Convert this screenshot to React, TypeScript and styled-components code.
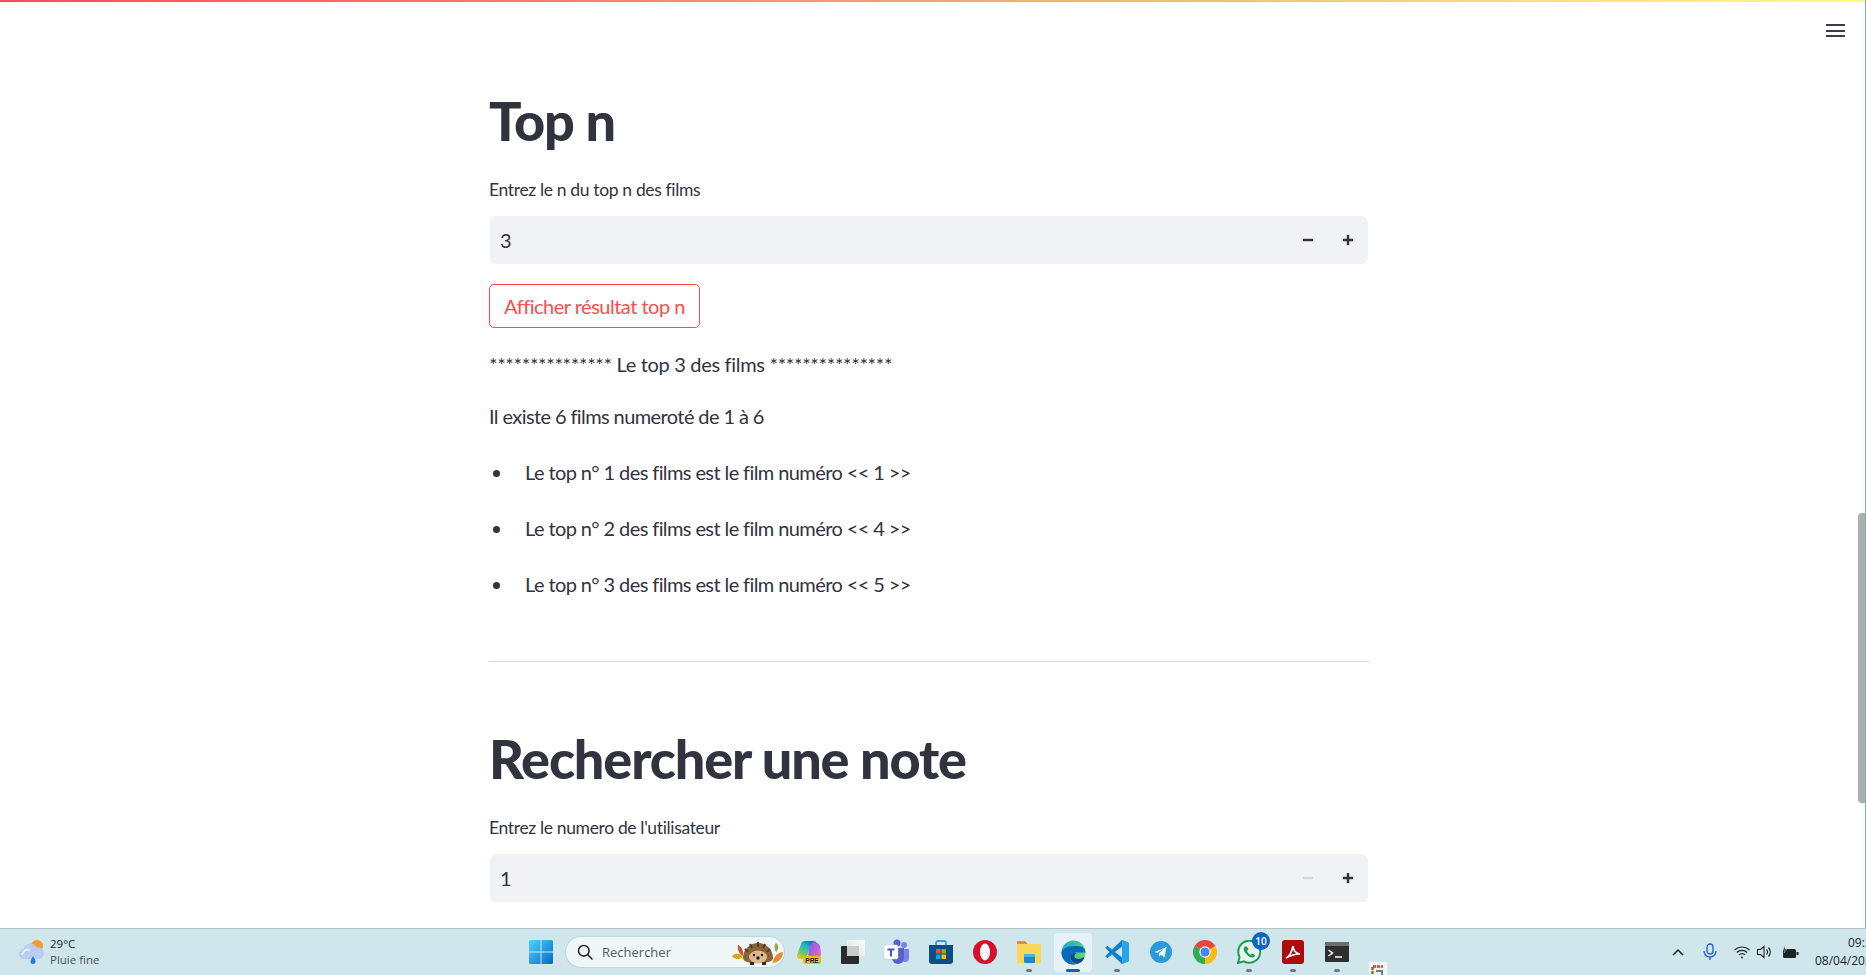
import styled, { createGlobalStyle } from "styled-components";

const GlobalStyle = createGlobalStyle`
  html, body { margin: 0; padding: 0; height: 100%; overflow: hidden; background: #fff; }
  #root { height: 100%; }
`;

const textFont = `"Lato", "Noto Sans", "Liberation Sans", sans-serif`;
const systemFont = `"Open Sans", "Noto Sans", sans-serif`;

const Screen = styled.div`
  height: 975px;
  display: grid;
  grid-template-rows: 1fr 47px;
  font-family: ${textFont};
  color: #31333f;
`;

const Page = styled.main`
  position: relative;
  overflow: hidden;
  border-right: 1px solid #6fb3b3;
  padding-top: 2px;
`;

const Rainbow = styled.div`
  position: absolute;
  top: 0;
  left: 0;
  right: 0;
  height: 2px;
  background: linear-gradient(90deg, #ff4b4b, #fffd80);
`;

const Hamburger = styled.div`
  position: absolute;
  top: 24px;
  left: 1826px;
  width: 19px;
  display: flex;
  flex-direction: column;
  gap: 3.5px;
  span {
    height: 2px;
    background: #3a3c49;
  }
`;

const ScrollThumb = styled.div`
  position: absolute;
  top: 513px;
  left: 1858px;
  width: 7px;
  height: 290px;
  background: #adadb2;
  border-radius: 4px 0 0 4px;
`;

const Column = styled.div`
  width: 880px;
  margin: 0 0 0 489px;
  padding-top: 85px;
`;

const Heading = styled.h1`
  margin: 0;
  height: 68px;
  line-height: 68px;
  font-size: 54px;
  font-weight: 900;
  letter-spacing: -1.15px;
  color: #31333f;
`;

const FieldLabel = styled.label`
  display: block;
  margin-top: 23px;
  height: 24px;
  line-height: 24px;
  font-size: 17.5px;
  letter-spacing: -0.35px;
`;

const NumberField = styled.div`
  margin-top: 14px;
  height: 48px;
  width: 878px;
  margin-left: 1px;
  display: flex;
  align-items: center;
  background: #f0f2f6;
  border-radius: 6px;
  font-size: 20px;
`;

const NumberValue = styled.span`
  flex: 1;
  padding-left: 10px;
`;

const StepButton = styled.button<{ $dim?: boolean }>`
  width: 40px;
  height: 48px;
  padding: 0;
  border: none;
  background: none;
  display: flex;
  align-items: center;
  justify-content: center;
  color: ${(p) => (p.$dim ? "#d5d6da" : "#31333f")};
`;

const OutlineButton = styled.button`
  display: block;
  margin-top: 20px;
  width: 211px;
  height: 44px;
  padding: 0;
  background: #fff;
  border: 1px solid #ff4b4b;
  border-radius: 5px;
  color: #ff4b4b;
  font-family: ${textFont};
  font-size: 20px;
  letter-spacing: -0.5px;
`;

const Paragraph = styled.p<{ $spacing: number }>`
  margin: 0;
  height: 30px;
  line-height: 30px;
  font-size: 20px;
  letter-spacing: ${(p) => p.$spacing}px;
`;

const ResultBlock = styled.div`
  margin-top: 21px;
  display: flex;
  flex-direction: column;
  gap: 22px;
`;

const Bullets = styled.ul`
  margin: 26px 0 0;
  padding: 0;
  list-style: none;
  display: flex;
  flex-direction: column;
  gap: 26px;
`;

const Bullet = styled.li`
  display: flex;
  align-items: center;
  height: 30px;
  line-height: 30px;
  font-size: 20px;
  letter-spacing: -0.6px;
  white-space: pre;
  &::before {
    content: "";
    width: 7px;
    height: 7px;
    border-radius: 50%;
    background: #31333f;
    margin: 2px 25px 0 4px;
  }
`;

const Rule = styled.hr`
  margin: 62px 0 63px;
  height: 1px;
  width: 880px;
  border: none;
  background: #d6d7db;
`;

const Taskbar = styled.footer`
  position: relative;
  display: flex;
  align-items: center;
  background: #cfe6ec;
  border-top: 1px solid #b4c0c4;
  box-sizing: border-box;
  overflow: hidden;
  font-family: ${systemFont};
`;

const Weather = styled.div`
  width: 519px;
  flex: none;
  display: flex;
  align-items: center;
  gap: 4px;
  padding-left: 18px;
  box-sizing: border-box;
`;

const WeatherText = styled.div`
  font-size: 11.5px;
  line-height: 16px;
  color: #1c2526;
  span {
    display: block;
    color: #4a5558;
  }
`;

const Slot = styled.div<{ $active?: boolean; $running?: boolean }>`
  position: relative;
  flex: none;
  width: 44px;
  height: 39px;
  display: flex;
  align-items: center;
  justify-content: center;
  border-radius: 4px;
  background: ${(p) => (p.$active ? "#e6f2f5" : "transparent")};
  &::after {
    content: "";
    display: ${(p) => (p.$running || p.$active ? "block" : "none")};
    position: absolute;
    bottom: 0;
    left: 50%;
    transform: translateX(-50%);
    width: ${(p) => (p.$active ? "14px" : "6px")};
    height: 3px;
    border-radius: 2px;
    background: ${(p) => (p.$active ? "#0067c0" : "#6f7b7f")};
  }
`;

const EdgeSlot = styled(Slot)`
  width: 38px;
  margin: 0 3px;
`;

const SearchPill = styled.div`
  flex: none;
  width: 218px;
  height: 30px;
  margin: 0 3px 0 3px;
  box-sizing: border-box;
  display: flex;
  align-items: center;
  gap: 9px;
  padding: 0 0 0 11px;
  background: #eff7f9;
  border-radius: 15px;
  box-shadow: 0 0 0 1px #c3d6db;
  font-size: 13px;
  color: #555f62;
`;

const SearchLabel = styled.span`
  flex: 1;
`;

const Badge = styled.span`
  position: absolute;
  top: -1px;
  right: 1px;
  width: 18px;
  height: 18px;
  border-radius: 50%;
  background: #0b66c2;
  color: #fff;
  font-size: 10px;
  font-weight: 600;
  line-height: 18px;
  text-align: center;
`;

const Tray = styled.div`
  margin-left: auto;
  display: flex;
  align-items: center;
  flex: none;
  width: 204px;
  overflow: hidden;
`;

const TrayIcon = styled.div<{ $w: number }>`
  width: ${(p) => p.$w}px;
  flex: none;
  display: flex;
  justify-content: center;
`;

const Clock = styled.div`
  flex: none;
  width: 60px;
  margin-left: 8px;
  font-size: 12px;
  line-height: 18px;
  color: #1c2526;
  white-space: nowrap;
  div:first-child {
    padding-left: 33px;
  }
`;

const FloatingTile = styled.div`
  position: absolute;
  left: 1369px;
  top: 33px;
  width: 18px;
  height: 20px;
  background: #eef6f8;
  display: flex;
  padding: 3px 0 0 2px;
  box-sizing: border-box;
`;

const MinusIcon = () => (
  <svg width="10" height="10" viewBox="0 0 10 10">
    <rect y="3.8" width="10" height="2.4" fill="currentColor" />
  </svg>
);

const PlusIcon = () => (
  <svg width="10" height="10" viewBox="0 0 10 10">
    <path d="M0 3.8h3.8V0h2.4v3.8H10v2.4H6.2V10H3.8V6.2H0z" fill="currentColor" />
  </svg>
);

const WeatherIcon = () => (
  <svg width="28" height="28" viewBox="0 0 28 28">
    <circle cx="19" cy="8" r="6" fill="#f79a2e" />
    <path d="M6 21a5 5 0 0 1-.5-10 7 7 0 0 1 13-1.500 5.500 5.500 0 0 1 3 11.500z" fill="#b9cdf2" />
    <path d="M4 17a6 6 0 0 1 8-5" stroke="#e8effb" strokeWidth="2" fill="none" />
    <path d="M12 18c2 3 2.500 4 2.500 5.500a2.500 2.500 0 0 1-5 0C9.500 22 11 20 12 18z" transform="translate(3 0)" fill="#1f7fe0" />
  </svg>
);

const WindowsIcon = () => (
  <svg width="24" height="24" viewBox="0 0 24 24">
    <defs>
      <linearGradient id="win" x1="0" y1="0" x2="1" y2="1">
        <stop offset="0" stopColor="#4fd3fb" />
        <stop offset="1" stopColor="#0669c9" />
      </linearGradient>
    </defs>
    <path d="M0 1.500A1.500 1.500 0 0 1 1.500 0h10v11.500H0zM12.500 0h10A1.500 1.500 0 0 1 24 1.500v10H12.500zM0 12.500h11.500V24h-10A1.500 1.500 0 0 1 0 22.500zM12.500 12.500H24v10a1.500 1.500 0 0 1-1.500 1.500h-10z" fill="url(#win)" />
  </svg>
);

const SearchIcon = () => (
  <svg width="16" height="16" viewBox="0 0 16 16" fill="none" stroke="#222" strokeWidth="1.600">
    <circle cx="6.800" cy="6.800" r="5.300" />
    <path d="M10.800 10.800l4.200 4.200" strokeLinecap="round" />
  </svg>
);

const Hedgehog = () => (
  <svg width="52" height="26" viewBox="0 0 52 26">
    <path d="M6 6c4 2 6 7 5 11C7 15 5 10 6 6z" fill="#c9572a" />
    <path d="M0 17c3-3 8-3 11 1-3 3-8 3-11-1z" fill="#d9a227" />
    <path d="M44 4c3 2 3 6 0 9-2-3-2-7 0-9z" fill="#9aa83a" />
    <path d="M41 24c0-6 4-10 10-11 0 6-4 10-10 11z" fill="#ec8a2b" />
    <path d="M11 19a15 15 0 0 1 30 0c0 3-4 5-15 5s-15-2-15-5z" fill="#8b6238" />
    <path d="M13 10l3 3M18 5l2 4M26 3v5M33 5l-2 4M38 10l-3 3" stroke="#5b3d20" strokeWidth="2" />
    <ellipse cx="26" cy="18" rx="9" ry="6.500" fill="#dcb98a" />
    <circle cx="22" cy="16" r="1.200" fill="#222" />
    <circle cx="30" cy="16" r="1.200" fill="#222" />
    <circle cx="26" cy="19" r="1.700" fill="#222" />
    <rect x="18" y="23" width="4" height="3" fill="#3e2c1a" />
    <rect x="30" y="23" width="4" height="3" fill="#3e2c1a" />
  </svg>
);

const CopilotIcon = () => (
  <svg width="26" height="26" viewBox="0 0 26 26">
    <defs>
      <linearGradient id="cop" x1="0.800" y1="0" x2="0.200" y2="1">
        <stop offset="0" stopColor="#1668d8" />
        <stop offset="0.35" stopColor="#2bb5c8" />
        <stop offset="0.7" stopColor="#6cc860" />
        <stop offset="1" stopColor="#e6c33a" />
      </linearGradient>
      <linearGradient id="cop2" x1="0" y1="0" x2="1" y2="1">
        <stop offset="0" stopColor="#6d5fe6" />
        <stop offset="0.6" stopColor="#c45fd8" />
        <stop offset="1" stopColor="#ef7ea0" />
      </linearGradient>
    </defs>
    <path d="M13 7l3-4a3 3 0 0 1 3-1l2 2a4 4 0 0 1 3 3l1 7a4 4 0 0 1-4 5h-9z" fill="url(#cop2)" />
    <path d="M9 2h9c-2 1-3 3-4 6l-3 9a4 4 0 0 1-4 3H4a3 3 0 0 1-3-4L5 5a4 4 0 0 1 4-3z" fill="url(#cop)" />
    <rect x="7" y="17" width="18" height="8" rx="2" fill="#f3bd0f" />
    <text x="16" y="23.500" fontSize="6.500" fontWeight="700" textAnchor="middle" fontFamily="Liberation Sans, sans-serif" fill="#222">PRE</text>
  </svg>
);

const DesktopsIcon = () => (
  <svg width="24" height="24" viewBox="0 0 24 24">
    <defs>
      <linearGradient id="dsk" x1="1" y1="0" x2="0" y2="1">
        <stop offset="0" stopColor="#fbfcfc" />
        <stop offset="1" stopColor="#dfe3e4" />
      </linearGradient>
    </defs>
    <rect x="6" y="0" width="18" height="16" rx="1" fill="url(#dsk)" />
    <rect x="0" y="6" width="18" height="18" rx="1" fill="#2b2b2b" />
    <rect x="6" y="6" width="12" height="10" fill="#c9cccd" />
  </svg>
);

const TeamsIcon = () => (
  <svg width="26" height="26" viewBox="0 0 26 26">
    <circle cx="20" cy="6" r="3" fill="#7b83eb" />
    <circle cx="13" cy="4" r="3.500" fill="#5b5fc7" />
    <path d="M16 10h9v9a4 4 0 0 1-8 0z" fill="#7b83eb" />
    <path d="M8 9h12v10a6 6 0 0 1-12 0z" fill="#5b5fc7" />
    <rect x="0" y="6" width="14" height="14" rx="1.500" fill="#fff" stroke="#c9cbe8" strokeWidth="0.500" />
    <path d="M3.500 9.500h7v2H8v6H6v-6H3.500z" fill="#4b53bc" />
  </svg>
);

const StoreIcon = () => (
  <svg width="24" height="24" viewBox="0 0 24 24">
    <path d="M7 6V3a2 2 0 0 1 2-2h6a2 2 0 0 1 2 2v3" fill="none" stroke="#25a7e2" strokeWidth="1.800" />
    <path d="M0 5h24v16a3 3 0 0 1-3 3H3a3 3 0 0 1-3-3z" fill="#0e4c86" />
    <rect x="7" y="9" width="4.500" height="4.500" fill="#f25022" />
    <rect x="12.500" y="9" width="4.500" height="4.500" fill="#7fba00" />
    <rect x="7" y="14.500" width="4.500" height="4.500" fill="#00a4ef" />
    <rect x="12.500" y="14.500" width="4.500" height="4.500" fill="#ffb900" />
  </svg>
);

const OperaIcon = () => (
  <svg width="24" height="24" viewBox="0 0 24 24">
    <circle cx="12" cy="12" r="12" fill="#d5112a" />
    <ellipse cx="12" cy="12" rx="5" ry="8.500" fill="#f4f7f7" />
  </svg>
);

const FolderIcon = () => (
  <svg width="24" height="24" viewBox="0 0 24 24">
    <path d="M0 2a1 1 0 0 1 1-1h7l3 3h-11z" fill="#d39a12" />
    <path d="M0 4h24v18a1 1 0 0 1-1 1H1a1 1 0 0 1-1-1z" fill="#fbd65a" />
    <rect x="7" y="14" width="11" height="9" rx="1" fill="#1c87c9" />
    <rect x="7" y="14" width="11" height="3" fill="#46b4e6" />
  </svg>
);

const EdgeIcon = () => (
  <svg width="25" height="25" viewBox="0 0 25 25">
    <defs>
      <linearGradient id="edg" x1="0" y1="0" x2="1" y2="0.600">
        <stop offset="0" stopColor="#1ea0d8" />
        <stop offset="1" stopColor="#5ddc6c" />
      </linearGradient>
    </defs>
    <circle cx="12.500" cy="12.500" r="12" fill="url(#edg)" />
    <path d="M0.500 12a12 12 0 0 0 17 11.500c-4 1-8-1-8-6 0-3 3-5 7-5h8C24 8 21 6 16 6 8 6 3 7 .5 12z" fill="#0c68bb" />
    <path d="M9.500 17c0 4.500 4 7 8 6.500 3-1 5.500-3.500 6-7-3 2.500-7 3-9 1.500-2-1.300-1-4 1-5-3.500-.5-6 1-6 4z" fill="#0b4b94" />
  </svg>
);

const VsCodeIcon = () => (
  <svg width="24" height="24" viewBox="0 0 24 24">
    <path d="M17 0l7 3v18l-7 3-10-9.500L2.500 18 0 16.500 4.500 12 0 7.500 2.500 6 7 9.500z" fill="#0f7fc9" />
    <path d="M17 0l7 3v18l-7 3z" fill="#26a6ed" />
    <path d="M17 6.500L10 12l7 5.500z" fill="#cfe6ec" />
  </svg>
);

const TelegramIcon = () => (
  <svg width="22" height="22" viewBox="0 0 24 24">
    <circle cx="12" cy="12" r="12" fill="#2a9bd6" />
    <path d="M5 12l13-5.500-2 11.500-4-3-2 2-.5-3.500 6-5.500-7.500 5z" fill="#e8f4fa" />
  </svg>
);

const ChromeIcon = () => (
  <svg width="24" height="24" viewBox="0 0 24 24">
    <path d="M12 12L1.600 6A12 12 0 0 1 22.400 6z" fill="#e8453c" />
    <path d="M12 12L22.400 6A12 12 0 0 1 12 24z" fill="#f9bc15" />
    <path d="M12 12L12 24A12 12 0 0 1 1.600 6z" fill="#34a853" />
    <circle cx="12" cy="12" r="5.700" fill="#fff" />
    <circle cx="12" cy="12" r="4.500" fill="#4285f4" />
  </svg>
);

const WhatsappIcon = () => (
  <svg width="24" height="24" viewBox="0 0 24 24">
    <path d="M1 23l1.600-6A11 11 0 1 1 7 21.400z" fill="#e8f5ee" stroke="#1c9c55" strokeWidth="2" />
    <path d="M8 6.500c-1.500 1-2 3 0 6s5 5 7.500 5c1.500 0 2.500-1 2.500-2.500l-3-1.500-1.200 1.300c-1.500-.5-3-2-3.800-3.800L11.500 9.500 10 6.500z" fill="#1c9c55" />
  </svg>
);

const AcrobatIcon = () => (
  <svg width="22" height="24" viewBox="0 0 22 24">
    <rect width="22" height="24" rx="3" fill="#ad0b0b" />
    <path d="M4 18c3-1 6-6 7-12 .5 5 2.500 7.500 7 8-5 0-9 1-14 4z" fill="none" stroke="#fff" strokeWidth="1.600" />
  </svg>
);

const TerminalIcon = () => (
  <svg width="24" height="20" viewBox="0 0 24 20">
    <rect width="24" height="20" rx="1.500" fill="#2f2f2f" />
    <rect width="24" height="4" fill="#6e6e6e" />
    <path d="M3.500 8l4 3-4 3" fill="none" stroke="#fff" strokeWidth="1.500" />
    <path d="M10 15h7" stroke="#fff" strokeWidth="1.500" />
  </svg>
);

const ChevronIcon = () => (
  <svg width="12" height="8" viewBox="0 0 12 8" fill="none" stroke="#1c2526" strokeWidth="1.500">
    <path d="M1 7l5-5 5 5" />
  </svg>
);

const MicIcon = () => (
  <svg width="14" height="18" viewBox="0 0 14 18" fill="none" stroke="#1f5fd0" strokeWidth="1.300">
    <rect x="4" y="1" width="6" height="10" rx="3" />
    <path d="M1 8a6 6 0 0 0 12 0M7 14v3" />
  </svg>
);

const WifiIcon = () => (
  <svg width="16" height="13" viewBox="0 0 16 13" fill="none" stroke="#1c2526" strokeWidth="1.100">
    <path d="M.5 4a11 11 0 0 1 15 0M2.800 6.500a7.500 7.500 0 0 1 10.400 0M5 9a4 4 0 0 1 6 0" />
    <circle cx="8" cy="11.500" r="1" fill="#1c2526" stroke="none" />
  </svg>
);

const SpeakerIcon = () => (
  <svg width="16" height="14" viewBox="0 0 16 14" fill="none" stroke="#1c2526" strokeWidth="1.100">
    <path d="M.5 4.500h3L7 1.500v11l-3.500-3h-3z" />
    <path d="M9.500 4.500a3.500 3.500 0 0 1 0 5M11.500 2.500a6.500 6.500 0 0 1 0 9" />
  </svg>
);

const BatteryIcon = () => (
  <svg width="17" height="13" viewBox="0 0 17 13">
    <rect x="1" y="3" width="13" height="9" rx="1.500" fill="#1c2526" />
    <rect x="14.500" y="6" width="2" height="3" fill="#1c2526" />
    <path d="M3 0L1 4h2l-1 3 3-4H3z" fill="#1c2526" stroke="#cfe6ec" strokeWidth="0.400" />
  </svg>
);

const TileIcon = () => (
  <svg width="14" height="17" viewBox="0 0 14 17" fill="none" stroke="#c8452a" strokeWidth="2.400" strokeDasharray="3 1">
    <path d="M1.500 17V1.500H12" />
    <path d="M5 6h7" stroke="#6f7b7f" strokeWidth="2" strokeDasharray="none" />
    <path d="M11 6v11" stroke="#6f7b7f" strokeWidth="2" strokeDasharray="none" />
  </svg>
);

const pinnedBefore = [CopilotIcon, DesktopsIcon, TeamsIcon, StoreIcon, OperaIcon];

const topResults = [
  { rank: 1, film: 1 },
  { rank: 2, film: 4 },
  { rank: 3, film: 5 },
];

const App = () => {
  return (
    <>
      <GlobalStyle />
      <Screen>
        <Page>
          <Rainbow />
          <Hamburger>
            <span />
            <span />
            <span />
          </Hamburger>
          <ScrollThumb />
          <Column>
            <Heading>Top n</Heading>
            <FieldLabel>Entrez le n du top n des films</FieldLabel>
            <NumberField>
              <NumberValue>3</NumberValue>
              <StepButton>
                <MinusIcon />
              </StepButton>
              <StepButton>
                <PlusIcon />
              </StepButton>
            </NumberField>
            <OutlineButton>Afficher résultat top n</OutlineButton>
            <ResultBlock>
              <Paragraph $spacing={-0.32}>*************** Le top 3 des films ***************</Paragraph>
              <Paragraph $spacing={-0.6}>Il existe 6 films numeroté de 1 à 6</Paragraph>
            </ResultBlock>
            <Bullets>
              {topResults.map((r) => (
                <Bullet key={r.rank}>
                  {`Le top n° ${r.rank} des films est le film numéro << ${r.film} >>`}
                </Bullet>
              ))}
            </Bullets>
            <Rule />
            <Heading>Rechercher une note</Heading>
            <FieldLabel>Entrez le numero de l'utilisateur</FieldLabel>
            <NumberField>
              <NumberValue>1</NumberValue>
              <StepButton $dim>
                <MinusIcon />
              </StepButton>
              <StepButton>
                <PlusIcon />
              </StepButton>
            </NumberField>
          </Column>
        </Page>
        <Taskbar>
          <Weather>
            <WeatherIcon />
            <WeatherText>
              29°C
              <span>Pluie fine</span>
            </WeatherText>
          </Weather>
          <Slot>
            <WindowsIcon />
          </Slot>
          <SearchPill>
            <SearchIcon />
            <SearchLabel>Rechercher</SearchLabel>
            <Hedgehog />
          </SearchPill>
          {pinnedBefore.map((Icon, i) => (
            <Slot key={i}>
              <Icon />
            </Slot>
          ))}
          <Slot $running>
            <FolderIcon />
          </Slot>
          <EdgeSlot $active>
            <EdgeIcon />
          </EdgeSlot>
          <Slot $running>
            <VsCodeIcon />
          </Slot>
          <Slot>
            <TelegramIcon />
          </Slot>
          <Slot>
            <ChromeIcon />
          </Slot>
          <Slot $running>
            <WhatsappIcon />
            <Badge>10</Badge>
          </Slot>
          <Slot $running>
            <AcrobatIcon />
          </Slot>
          <Slot $running>
            <TerminalIcon />
          </Slot>
          <FloatingTile>
            <TileIcon />
          </FloatingTile>
          <Tray>
            <TrayIcon $w={32}>
              <ChevronIcon />
            </TrayIcon>
            <TrayIcon $w={32}>
              <MicIcon />
            </TrayIcon>
            <TrayIcon $w={31}>
              <WifiIcon />
            </TrayIcon>
            <TrayIcon $w={16}>
              <SpeakerIcon />
            </TrayIcon>
            <TrayIcon $w={34}>
              <BatteryIcon />
            </TrayIcon>
            <Clock>
              <div>09:25</div>
              <div>08/04/2024</div>
            </Clock>
          </Tray>
        </Taskbar>
      </Screen>
    </>
  );
};

export default App;
